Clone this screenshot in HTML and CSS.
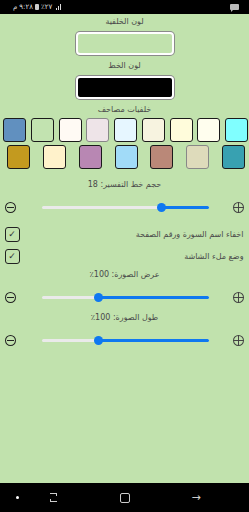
FILE: index.html
```html
<!DOCTYPE html>
<html lang="ar" dir="rtl">
<head>
    <meta charset="UTF-8">
    <meta name="viewport" content="width=device-width, initial-scale=1.0">
    <title>الإعدادات</title>
    <link rel="stylesheet" href="styles.css">
</head>
<body>
    <!-- شريط الحالة -->
    <div class="status-bar">
        <div class="status-left">
            <span>م</span>
            <span>٩:٢٨</span>
            <span class="battery"></span>
            <span>٪٢٧</span>
            <span class="signal"><i></i><i></i><i></i></span>
        </div>
        <div class="msg-icon"></div>
    </div>

    <div class="settings">
        <div class="label">لون الخلفية</div>
        <div class="color-box"></div>

        <div class="label">لون الخط</div>
        <div class="color-box dark"></div>

        <div class="label">خلفيات مصاحف</div>
        <div class="swatch-row">
            <div class="swatch" style="background:#80ffff"></div>
            <div class="swatch" style="background:#fffeee"></div>
            <div class="swatch" style="background:#fffcdb"></div>
            <div class="swatch" style="background:#f7f3e0"></div>
            <div class="swatch" style="background:#e6f6ff"></div>
            <div class="swatch soft" style="background:#eee4e8"></div>
            <div class="swatch" style="background:#fffaf4"></div>
            <div class="swatch" style="background:#c2e3b0"></div>
            <div class="swatch" style="background:#6190bf"></div>
        </div>
        <div class="swatch-row wide">
            <div class="swatch" style="background:#38a1b1"></div>
            <div class="swatch soft" style="background:#dedbbb"></div>
            <div class="swatch" style="background:#ba8878"></div>
            <div class="swatch" style="background:#a1dbf8"></div>
            <div class="swatch" style="background:#b887b3"></div>
            <div class="swatch" style="background:#fff2cb"></div>
            <div class="swatch" style="background:#c39a1f"></div>
        </div>

        <div class="label gap-big">حجم خط التفسير: 18</div>
        <div class="slider-row">
            <span class="round-btn plus"></span>
            <div class="track"><div class="fill" style="width:28%"></div><div class="thumb" style="right:28%"></div></div>
            <span class="round-btn minus"></span>
        </div>

        <div class="check-row first">
            <span class="check-text">اخفاء اسم السورة ورقم الصفحة</span>
            <span class="checkbox">✓</span>
        </div>
        <div class="check-row">
            <span class="check-text">وضع ملء الشاشة</span>
            <span class="checkbox">✓</span>
        </div>

        <div class="label">عرض الصورة: 100٪</div>
        <div class="slider-row">
            <span class="round-btn plus"></span>
            <div class="track"><div class="fill" style="width:66%"></div><div class="thumb" style="right:66%"></div></div>
            <span class="round-btn minus"></span>
        </div>

        <div class="label">طول الصورة: 100٪</div>
        <div class="slider-row">
            <span class="round-btn plus"></span>
            <div class="track"><div class="fill" style="width:66%"></div><div class="thumb" style="right:66%"></div></div>
            <span class="round-btn minus"></span>
        </div>
    </div>

    <!-- شريط التنقل -->
    <div class="nav-bar">
        <span class="nav-item"><span class="nav-dot"></span></span>
        <span class="nav-item"><span class="nav-recent"><i></i><i></i></span></span>
        <span class="nav-item"><span class="nav-home"></span></span>
        <span class="nav-item"><span class="nav-back">→</span></span>
    </div>
</body>
</html>
```

FILE: styles.css
```css
html, body {
    margin: 0;
    padding: 0;
}
body {
    width: 249px;
    height: 512px;
    background: #c1e2ad;
    font-family: "DejaVu Sans", "Liberation Sans", sans-serif;
    color: #444;
    display: flex;
    flex-direction: column;
    overflow: hidden;
}

/* status bar */
.status-bar {
    height: 14px;
    background: #000;
    display: flex;
    flex-direction: row-reverse;
    justify-content: space-between;
    align-items: center;
    padding: 0 10px 0 13px;
}
.status-left {
    direction: ltr;
    display: flex;
    align-items: center;
    gap: 2px;
    color: #ddd;
    font-size: 7px;
}
.battery {
    width: 4px;
    height: 6px;
    background: #ccc;
    border-radius: 1px;
}
.signal {
    display: flex;
    align-items: flex-end;
    gap: 1px;
    height: 6px;
    margin-left: 2px;
}
.signal i {
    width: 1px;
    background: #ddd;
}
.signal i:nth-child(1) { height: 2px; }
.signal i:nth-child(2) { height: 4px; }
.signal i:nth-child(3) { height: 6px; }
.msg-icon {
    width: 9px;
    height: 6px;
    background: #bbb;
    border-radius: 1px;
    position: relative;
}
.msg-icon::after {
    content: "";
    position: absolute;
    left: 1px;
    bottom: -2px;
    border-top: 2px solid #bbb;
    border-right: 2px solid transparent;
}

/* settings */
.settings {
    flex: 1;
    display: flex;
    flex-direction: column;
    align-items: center;
}
.label {
    font-size: 8px;
    line-height: 10px;
    height: 10px;
    margin-top: 3px;
    color: #4a4a4a;
}
.color-box {
    width: 94px;
    height: 19px;
    margin-top: 5px;
    margin-bottom: 3px;
    border: 2px solid #fff;
    border-radius: 4px;
    box-shadow: 0 0 0 1px #8a8a8a;
    background: #c1e2ad;
}
.color-box.dark {
    background: #000;
}

.swatch-row {
    width: 245px;
    display: flex;
    justify-content: space-between;
    padding: 0 1px 0 3px;
    margin-top: 3px;
}
.swatch-row.wide {
    width: 238px;
    padding: 0 4px 0 7px;
}
.swatch {
    width: 21px;
    height: 22px;
    border: 1px solid #1a1a1a;
    border-radius: 3px;
}
.swatch.soft {
    border-color: #888;
}
.label.gap-big {
    margin-top: 11px;
}

/* sliders */
.slider-row {
    width: 239px;
    height: 12px;
    display: flex;
    align-items: center;
    justify-content: space-between;
    padding: 0 5px;
    margin-top: 11px;
}
.slider-row + .label {
    margin-top: 10px;
}
.track {
    width: 168px;
    height: 3px;
    background: #eaeaea;
    border-radius: 2px;
    position: relative;
    margin: 0 24px 0 26px;
}
.fill {
    position: absolute;
    right: 0;
    top: 0;
    height: 3px;
    background: #0f78f0;
    border-radius: 2px;
}
.thumb {
    position: absolute;
    top: -3px;
    width: 9px;
    height: 9px;
    margin-right: -4px;
    border-radius: 50%;
    background: #0f78f0;
}
.round-btn {
    width: 9px;
    height: 9px;
    border: 1px solid #222;
    border-radius: 50%;
    position: relative;
}
.round-btn::before,
.round-btn::after {
    content: "";
    position: absolute;
    background: #222;
}
.minus::before {
    left: 1px;
    right: 1px;
    top: 4px;
    height: 1px;
}
.minus::after {
    display: none;
}
.plus {
    border-color: #444;
}
.plus::before {
    left: -1px;
    right: -1px;
    top: 4px;
    height: 1px;
    background: #444;
}
.plus::after {
    top: -1px;
    bottom: -1px;
    left: 4px;
    width: 1px;
    background: #444;
}

/* checkboxes */
.check-row {
    width: 239px;
    display: flex;
    justify-content: space-between;
    align-items: center;
    padding: 0 6px 0 5px;
    margin-top: 7px;
}
.check-row.first {
    margin-top: 14px;
}
.check-text {
    font-size: 8px;
    color: #4a4a4a;
}
.checkbox {
    width: 13px;
    height: 13px;
    border: 1px solid #222;
    border-radius: 3px;
    font-size: 9px;
    line-height: 13px;
    text-align: center;
    color: #333;
}
.check-row + .label {
    margin-top: 6px;
}

/* nav bar */
.nav-bar {
    height: 29px;
    background: #000;
    display: flex;
    direction: ltr;
    align-items: center;
    padding: 0 0 0 2px;
}
.nav-item {
    display: flex;
    justify-content: center;
    align-items: center;
}
.nav-item:nth-child(1) { width: 30px; }
.nav-item:nth-child(2) { width: 42px; }
.nav-item:nth-child(3) { width: 102px; }
.nav-item:nth-child(4) { width: 40px; }
.nav-dot {
    width: 3px;
    height: 3px;
    border-radius: 50%;
    background: #fff;
}
.nav-recent {
    display: flex;
    flex-direction: column;
    gap: 3px;
    width: 7px;
}
.nav-recent i {
    height: 2px;
    border-top: 1px solid #ccc;
    border-right: 1px solid #ccc;
}
.nav-recent i + i {
    border-right: none;
    border-left: 1px solid #ccc;
    border-top: none;
    border-bottom: 1px solid #ccc;
}
.nav-back {
    color: #ccc;
    font-size: 11px;
}
.nav-home {
    width: 8px;
    height: 8px;
    border: 1px solid #ccc;
    border-radius: 2px;
}
```
